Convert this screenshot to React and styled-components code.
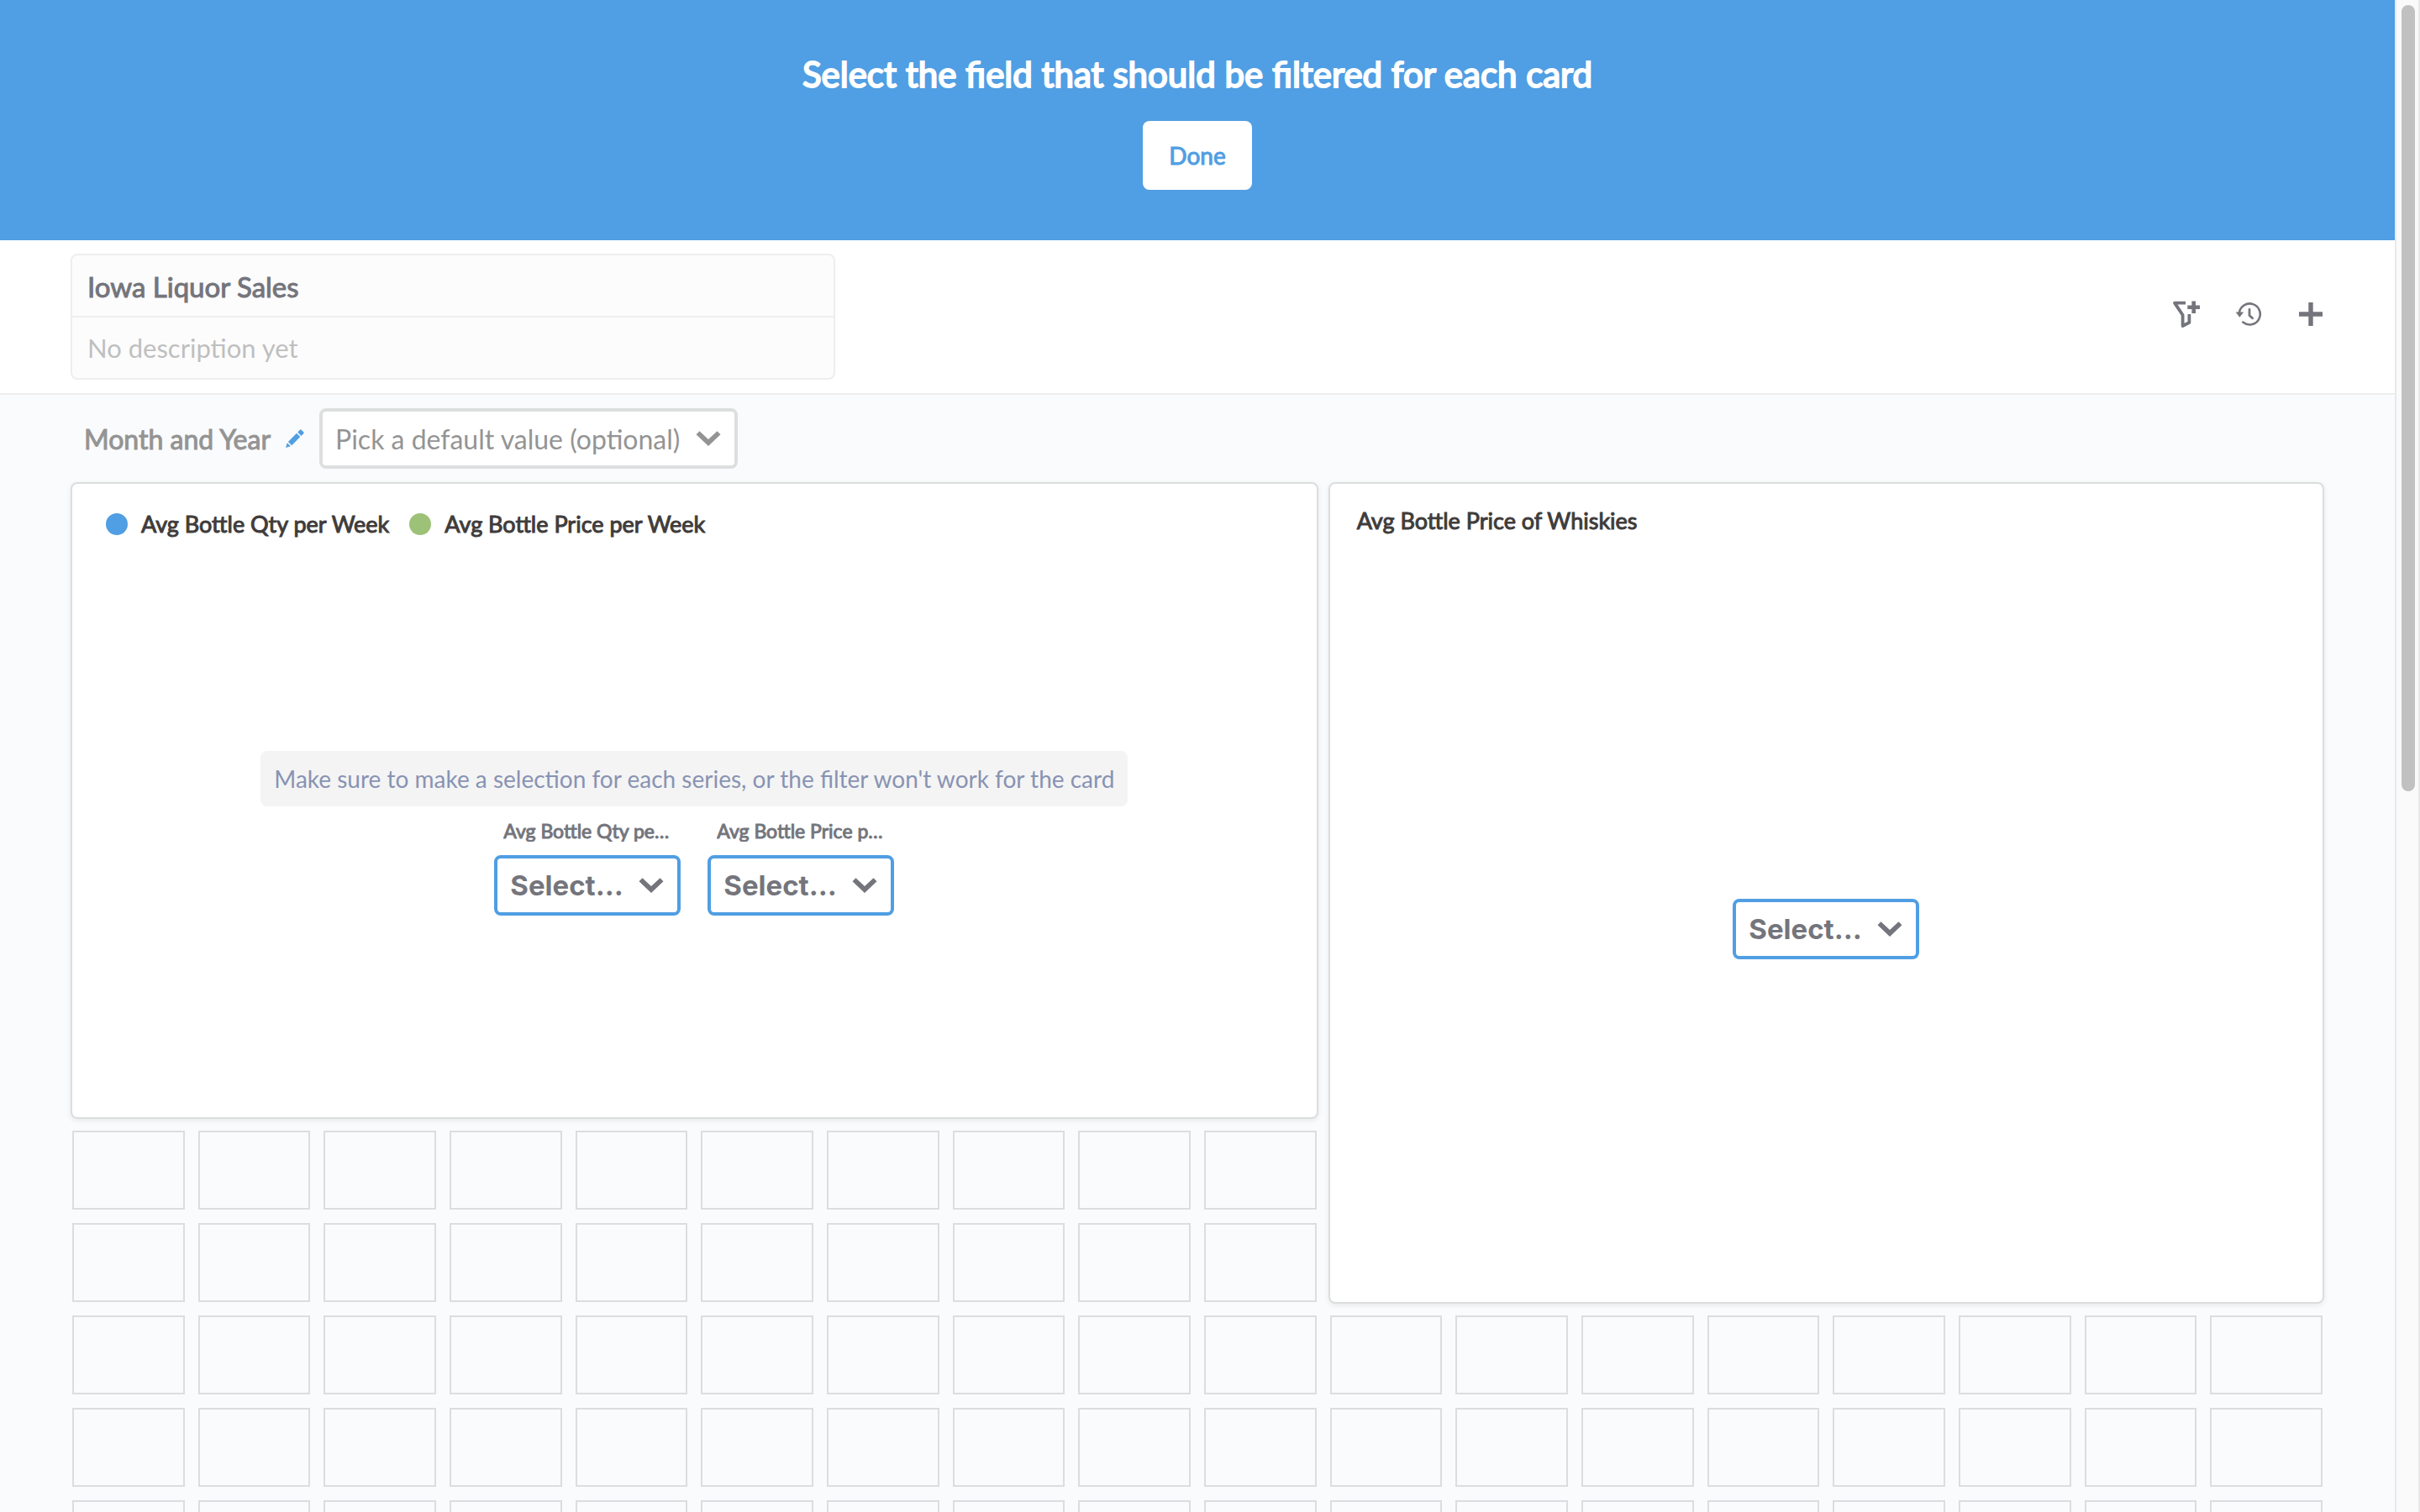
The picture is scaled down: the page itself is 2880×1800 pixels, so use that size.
import React from "react";
import styled, { createGlobalStyle, css } from "styled-components";

const COLUMNS = 18;
const ROWS = 12;

const color = {
  brand: "#509ee3",
  green: "#9cc177",
  textDark: "#403c3b",
  textMedium: "#74757c",
  textLight: "#949494",
  placeholder: "#bfbfbf",
  border: "#dcdddd",
  borderLight: "#eeeeee",
  page: "#fafbfd",
};

const GlobalStyle = createGlobalStyle`
  *, *::before, *::after { box-sizing: border-box; }
  body {
    margin: 0;
    overflow: hidden;
    background: ${color.page};
    font-family: Lato, "Open Sans", sans-serif;
    font-size: 32px;
  }
  button, input, select { font: inherit; margin: 0; }
`;

/* Lato regular thickened evenly, as used for every heading and label. */
const heavy = css`
  font-weight: 400;
  -webkit-text-stroke: 1px currentColor;
`;

const Viewport = styled.div`
  display: flex;
  height: 100vh;
`;

const Content = styled.main`
  flex: 1;
  min-width: 0;
  overflow: hidden;
`;

const ScrollTrack = styled.div`
  width: 30px;
  padding: 6px 4px 6px 6px;
  background: #fafafa;
  border: solid #e9e9e9;
  border-width: 0 2px;
`;

const ScrollThumb = styled.div`
  width: 16px;
  height: 52vh;
  border-radius: 8px;
  background: #c1c1c1;
`;

const Banner = styled.section`
  display: flex;
  flex-direction: column;
  align-items: center;
  gap: 32px;
  padding: 64px 0 60px;
  background: ${color.brand};
`;

const BannerTitle = styled.h1`
  margin: 0;
  color: #fff;
  font-size: 42px;
  line-height: 48px;
  ${heavy}
  -webkit-text-stroke-width: 2px;
`;

const DoneButton = styled.button`
  padding: 24px 31px;
  border: 0;
  border-radius: 8px;
  background: #fff;
  color: ${color.brand};
  font-size: 28px;
  line-height: 34px;
  cursor: pointer;
  && { ${heavy} }
`;

const Header = styled.header`
  display: flex;
  align-items: center;
  justify-content: space-between;
  padding: 16px 84px;
  background: #fff;
  border-bottom: 2px solid ${color.borderLight};
`;

const DetailsForm = styled.form`
  display: flex;
  flex-direction: column;
  width: 910px;
  border: 2px solid ${color.borderLight};
  border-radius: 8px;
  background: #fcfcfc;
`;

const DetailInput = styled.input`
  height: ${(p) => (p.$title ? 74 : 72)}px;
  padding: 0 18px;
  border: 0;
  outline: 0;
  background: transparent;
  color: ${color.textMedium};
  && { font-size: 31px; }
  &::placeholder { color: ${color.placeholder}; }
  ${(p) =>
    p.$title &&
    css`
      padding-top: 2px;
      border-bottom: 2px solid ${color.borderLight};
      && {
        font-size: 33px;
        ${heavy}
      }
    `}
`;

const HeaderActions = styled.nav`
  display: flex;
  gap: 42px;
  padding-bottom: 6px;
`;

const IconButton = styled.button`
  display: flex;
  align-items: center;
  justify-content: center;
  width: 32px;
  height: 32px;
  padding: 0;
  border: 0;
  background: transparent;
  color: ${(p) => (p.$brand ? color.brand : color.textMedium)};
  cursor: pointer;
`;

const ParameterBar = styled.section`
  display: flex;
  align-items: center;
  padding: 16px 84px 16px 100px;
`;

const ParameterName = styled.label`
  margin-right: 13px;
  color: ${color.textLight};
  ${heavy}
`;

const PickerBox = styled.div`
  display: grid;
  align-items: center;
  width: ${(p) => p.$width}px;
  color: ${(p) => (p.$mapping ? color.textMedium : color.textLight)};
  > * { grid-area: 1 / 1; }
  > svg {
    justify-self: end;
    margin-right: 20px;
    pointer-events: none;
  }
`;

const Picker = styled.select`
  appearance: none;
  width: 100%;
  height: 72px;
  padding: 0 15px;
  border: 4px solid ${(p) => (p.$mapping ? color.brand : "#dddfdf")};
  border-radius: 8px;
  background: #fff;
  color: inherit;
  ${(p) =>
    p.$mapping &&
    css`
      && {
        font-family: Inter, "Liberation Sans", sans-serif;
        font-size: 33px;
        font-weight: 700;
      }
    `}
`;

const EditPencil = styled(IconButton)`
  margin-right: 13px;
`;

const Grid = styled.div`
  display: grid;
  grid-template-columns: repeat(${COLUMNS}, 1fr);
  grid-auto-rows: 94px;
  gap: 16px;
  padding: 2px 86px;
`;

const Cell = styled.div`
  grid-area: ${(p) => p.$row} / ${(p) => p.$column};
  border: 2px solid ${color.border};
`;

const Card = styled.article`
  grid-area: 1 / ${(p) => p.$column} / span ${(p) => p.$rows} / span ${(p) => p.$columns};
  display: flex;
  flex-direction: column;
  margin: -2px;
  border: 2px solid ${color.border};
  border-radius: 8px;
  background: #fff;
  box-shadow: 0 2px 6px rgba(0, 0, 0, 0.08);
`;

const CardTitle = styled.h2`
  margin: 0;
  padding: 28px 32px 18px;
  color: ${color.textDark};
  font-size: 27px;
  line-height: 32px;
  ${heavy}
`;

const Legend = styled.ul`
  display: flex;
  gap: 24px;
  margin: 0;
  padding: 32px 40px 14px;
  list-style: none;
`;

const LegendItem = styled.li`
  display: flex;
  align-items: center;
  gap: 16px;
  color: ${color.textDark};
  font-size: 27px;
  line-height: 32px;
  ${heavy}
  &::before {
    content: "";
    width: 26px;
    height: 26px;
    border-radius: 50%;
    background: ${(p) => p.$color};
  }
`;

const CardBody = styled.div`
  flex: 1;
  display: flex;
  flex-direction: column;
  align-items: center;
  justify-content: center;
  gap: 8px;
`;

const Hint = styled.p`
  margin: 0;
  padding: 16px;
  border-radius: 8px;
  background: #f4f4f4;
  color: #8893b3;
  font-size: 28px;
  line-height: 34px;
`;

const MappingRow = styled.div`
  display: flex;
  gap: 32px;
`;

const Mapping = styled.div`
  display: flex;
  flex-direction: column;
  align-items: center;
  gap: 16px;
  padding-top: 8px;
`;

const MappingLabel = styled.label`
  width: 200px;
  overflow: hidden;
  white-space: nowrap;
  text-overflow: ellipsis;
  color: ${color.textMedium};
  font-size: 23px;
  line-height: 26px;
  ${heavy}
`;

const Chevron = () => (
  <svg width="30" height="18" viewBox="0 0 30 18" aria-hidden="true">
    <path d="M0.5 4.3 4.5 0.3 15 10 25.5 0.3 29.5 4.3 15 18Z" fill="currentColor" />
  </svg>
);

const FilterPlusIcon = () => (
  <svg width="32" height="32" viewBox="0 0 32 32" fill="none" stroke="currentColor" aria-hidden="true">
    <path d="M15 2.6H2L11.6 17V30L19.4 26V16" strokeWidth="3.8" strokeLinejoin="round" />
    <path d="M17.3 7.8H32M24.7 0.4V15" strokeWidth="4.6" />
  </svg>
);

const HistoryIcon = () => (
  <svg width="32" height="32" viewBox="0 0 32 32" fill="none" stroke="currentColor" aria-hidden="true">
    <path d="M4.9 14.2A12.5 12.5 0 1 1 9.3 25.6" strokeWidth="2.6" strokeLinecap="round" />
    <path d="M17 10.4V17.4L20.6 20.8" strokeWidth="2.8" strokeLinecap="round" strokeLinejoin="round" />
    <path d="M0.6 13.6H10.2L5.3 19.8Z" fill="currentColor" stroke="none" />
  </svg>
);

const PlusIcon = () => (
  <svg width="28" height="28" viewBox="0 0 28 28" fill="currentColor" aria-hidden="true">
    <path d="M11.3 0h5.4v11.3H28v5.4H16.7V28h-5.4V16.7H0v-5.4h11.3Z" />
  </svg>
);

const PencilIcon = () => (
  <svg width="22" height="22" viewBox="0 0 22 22" fill="currentColor" aria-hidden="true">
    <path d="M14.2 3.6 17 0.7Q17.8 0 18.6 0.7L21.4 3.5Q22 4.3 21.4 5L18.5 7.9Z" />
    <path d="M13 4.8 17.3 9.1 7.2 19.2 2.9 14.9Z" />
    <path d="M1.8 16.2 5.9 20.3 0 22Z" />
  </svg>
);

function FieldMapping({ id, label }) {
  return (
    <Mapping>
      {label && <MappingLabel htmlFor={id}>{label}</MappingLabel>}
      <PickerBox $width={222} $mapping>
        <Picker id={id} $mapping aria-label={label ? undefined : "Field to filter"}>
          <option>Select…</option>
        </Picker>
        <Chevron />
      </PickerBox>
    </Mapping>
  );
}

const series = [
  { id: "qty", name: "Avg Bottle Qty per Week", color: color.brand },
  { id: "price", name: "Avg Bottle Price per Week", color: color.green },
];

/* Free slots of the dashboard grid: those that neither card covers. */
const freeCells = Array.from({ length: ROWS * COLUMNS }, (_, i) => ({
  row: Math.floor(i / COLUMNS) + 1,
  column: (i % COLUMNS) + 1,
})).filter(({ row, column }) => row > (column <= 10 ? 7 : 9));

export default function App() {
  return (
    <Viewport>
      <GlobalStyle />
      <Content>
        <Banner>
          <BannerTitle>Select the field that should be filtered for each card</BannerTitle>
          <DoneButton type="button">Done</DoneButton>
        </Banner>

        <Header>
          <DetailsForm>
            <DetailInput $title aria-label="Dashboard name" defaultValue="Iowa Liquor Sales" />
            <DetailInput aria-label="Description" placeholder="No description yet" />
          </DetailsForm>
          <HeaderActions>
            <IconButton type="button" aria-label="Add a filter"><FilterPlusIcon /></IconButton>
            <IconButton type="button" aria-label="Revision history"><HistoryIcon /></IconButton>
            <IconButton type="button" aria-label="Add a question"><PlusIcon /></IconButton>
          </HeaderActions>
        </Header>

        <ParameterBar>
          <ParameterName htmlFor="month-year">Month and Year</ParameterName>
          <EditPencil type="button" $brand aria-label="Edit filter"><PencilIcon /></EditPencil>
          <PickerBox $width={498}>
            <Picker id="month-year">
              <option>Pick a default value (optional)</option>
            </Picker>
            <Chevron />
          </PickerBox>
        </ParameterBar>

        <Grid>
          {freeCells.map(({ row, column }) => (
            <Cell key={`${row}-${column}`} $row={row} $column={column} />
          ))}
          <Card $column={1} $columns={10} $rows={7}>
            <Legend>
              {series.map((s) => (
                <LegendItem key={s.id} $color={s.color}>{s.name}</LegendItem>
              ))}
            </Legend>
            <CardBody>
              <Hint>Make sure to make a selection for each series, or the filter won't work for the card</Hint>
              <MappingRow>
                {series.map((s) => (
                  <FieldMapping key={s.id} id={s.id} label={s.name} />
                ))}
              </MappingRow>
            </CardBody>
          </Card>
          <Card $column={11} $columns={8} $rows={9}>
            <CardTitle>Avg Bottle Price of Whiskies</CardTitle>
            <CardBody>
              <FieldMapping id="whiskies" />
            </CardBody>
          </Card>
        </Grid>
      </Content>
      <ScrollTrack>
        <ScrollThumb />
      </ScrollTrack>
    </Viewport>
  );
}
